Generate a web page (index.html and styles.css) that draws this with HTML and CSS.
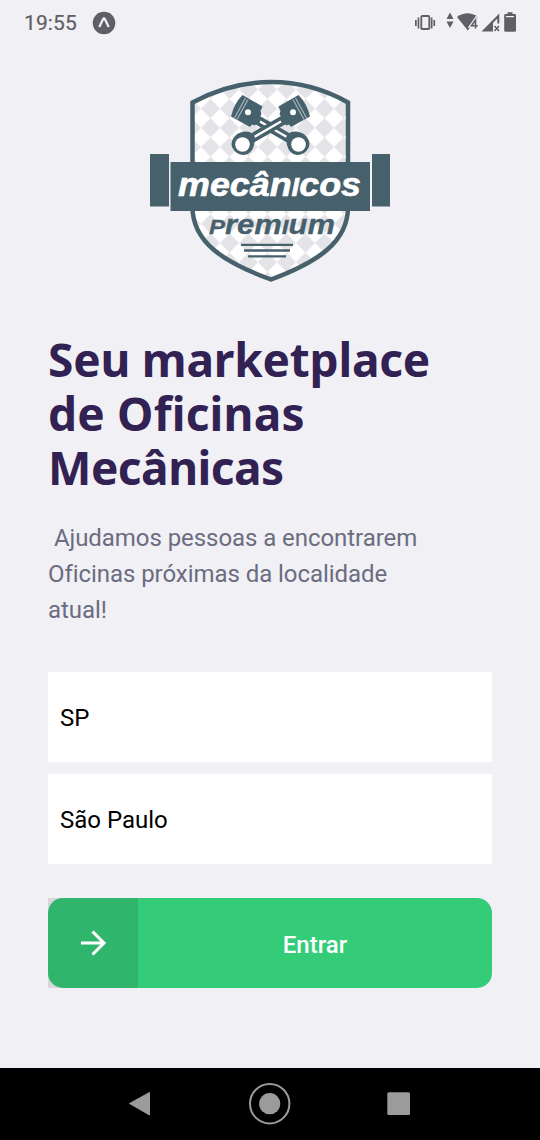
FILE: index.html
```html
<!DOCTYPE html>
<html lang="pt-BR">
<head>
<meta charset="utf-8">
<meta name="viewport" content="width=device-width">
<title>Mecânicos Premium</title>
<link rel="stylesheet" href="styles.css">
</head>
<body>
<div class="screen">
  <header class="status">
    <span class="clock">19:55</span>
    <svg class="app-icon" viewBox="0 0 24 24"><circle cx="12" cy="12" r="11.3" fill="#5f5f65"/><path d="M7.300 16 11 8.200q1-1.500 2 0l3.700 7.800" fill="none" stroke="#f0f0f5" stroke-width="2.200"/></svg>
    <svg class="indicators" viewBox="414 10 104 26" fill="#5f5f65">
      <path d="M415 20h1.700v6H415zM417.600 17.500h1.700v11h-1.700zM430.800 17.500h1.700v11h-1.700zM433.400 20h1.700v6h-1.700z"/>
      <rect x="421.300" y="16" width="8" height="13" rx="1" fill="none" stroke="#5f5f65" stroke-width="1.800"/>
      <path d="m450 12.500 3.500 6.500h-7zM450 28l-3.500-6.500h7z"/>
      <path d="M457 17q10.500-7.500 21 0l-10.200 13.500z"/>
      <path d="M475.500 28.500v-8.500l-4 5.700h6.300" fill="none" stroke="#f0f0f5" stroke-width="4"/>
      <path d="M475.500 28.500v-8.500l-4 5.700h6.300" fill="none" stroke="#5f5f65" stroke-width="1.600"/>
      <path d="M481.500 31.500 499.300 13.500v10h-2v-5L493 23v8.500z"/>
      <path d="m494.500 26 4.500 5m0-5-4.500 5" stroke="#5f5f65" stroke-width="1.500"/>
      <path d="M507.500 12.300h5V14h2.200q1.300 0 1.300 1.300v15.200q0 1.300-1.300 1.300h-9.200q-1.300 0-1.300-1.300V15.300q0-1.300 1.300-1.300h2z"/>
      <path d="M506 16h8v1.200h-8z" fill="#f0f0f5"/>
    </svg>
  </header>
  <main class="content">
    <svg class="logo" viewBox="150 79 240 204" role="img" aria-label="Mecânicos Premium">
      <defs>
        <pattern id="checks" x="201" y="99" width="19" height="19.200" patternUnits="userSpaceOnUse">
          <path fill="#fff" d="M0 0h19v19.200H0z"/><path d="m9.500 0 9.500 9.600-9.500 9.600L0 9.600z" fill="#e4e4e8"/>
        </pattern>
        <g id="piston">
          <path d="m254 118 38 22" stroke="#46606c" stroke-width="9.500"/>
          <path d="m260 121.500 29 16.800" stroke="#fff" stroke-width="2.200"/>
          <path d="m286 137 5-5q8-2 14 3 6 6 4 12-4 8-12 8-8-1-10-10z" fill="#46606c"/>
          <circle cx="298.500" cy="144.500" r="7.300" fill="#fff"/>
          <path d="m242.500 95 20 11.500-2 4.500 1 3-6.500 11.500-3-1-2 2.500-19-10.500q3-13 11.500-21.500z" fill="#46606c"/>
          <path d="m234.500 118 11-20M237 119.500l11-20" stroke="#a8b6bd" stroke-width="1.200"/>
          <circle cx="248" cy="112.300" r="3" fill="#fff"/>
        </g>
      </defs>
      <path d="M192.500 102.500Q230 82 271 82t77 20.500V207c0 35-30 55-77 72.500-48-17.500-78.500-37.500-78.500-72.500z" fill="url(#checks)" stroke="#46606c" stroke-width="4.500"/>
      <use href="#piston"/><use href="#piston" transform="translate(541) scale(-1 1)"/>
      <path d="M150 154h19v52.500h-19zM372 154h18v52.500h-18zM170.500 162H370v49H170.500z" fill="#46606c"/>
      <text class="brand" x="178" y="196.300" textLength="183" lengthAdjust="spacingAndGlyphs">mecân<tspan class="brand-small">i</tspan>cos</text>
      <text class="tier" x="209" y="233.500" textLength="126" lengthAdjust="spacingAndGlyphs"><tspan class="tier-small">p</tspan>rem<tspan class="tier-small">i</tspan>um</text>
      <path d="M241 244.800h52M244 250.500h46M248 256.300h38" stroke="#46606c" stroke-width="2.300"/>
    </svg>
    <h1 class="title"><span class="line first">Seu marketplace</span><span class="line second">de Oficinas</span><span class="line third">Mecânicas</span></h1>
    <p class="description">&nbsp;Ajudamos pessoas a encontrarem Oficinas próximas da localidade atual!</p>
    <div class="field">SP</div>
    <div class="field">São Paulo</div>
    <div class="button">
      <span class="button-icon"><svg viewBox="0 0 30 30"><path d="M3 15h23M14.500 3.500 26 15 14.500 26.500" fill="none" stroke="#fff" stroke-width="3"/></svg></span>
      <span class="button-label">Entrar</span>
    </div>
  </main>
  <nav class="navigation">
    <svg viewBox="0 1068 540 72" fill="#9b9b9b"><path d="m129.500 1103.500 20-11v22.500z" stroke="#9b9b9b" stroke-linejoin="round"/><circle cx="269.700" cy="1103.700" r="10.600"/><circle cx="269.700" cy="1103.700" r="19.700" fill="none" stroke="#9b9b9b" stroke-width="2"/><rect x="387.300" y="1092.300" width="22.700" height="22.700" rx="1.500"/></svg>
  </nav>
</div>
</body>
</html>
```

FILE: styles.css
```css
body { margin: 0; background: #f0f0f5; font-family: Roboto, sans-serif; }
.screen { width: 540px; height: 1140px; display: flex; flex-direction: column; overflow: hidden; }
.status { height: 45px; flex: none; display: flex; align-items: center; padding: 0 22px 0 24px; color: #5f5f65; box-sizing: border-box; }
.clock { width: 53px; font-size: 21px; font-weight: 400; letter-spacing: 0.1px; -webkit-text-stroke: 0.2px #5f5f65; }
.app-icon { width: 24px; height: 24px; margin-left: 15px; }
.indicators { width: 104px; height: 26px; margin-left: auto; }
.content { flex: 1; display: flex; flex-direction: column; padding: 34px 48px 0; }
.logo { width: 240px; height: 204px; align-self: center; }
.brand { font: italic 700 34px "Liberation Sans", sans-serif; fill: #fff; stroke: #fff; stroke-width: 0.6px; }
.brand-small { font-size: 37px; font-variant: small-caps; }
.tier { font: italic 700 27px "Liberation Sans", sans-serif; fill: #46606c; stroke: #46606c; stroke-width: 0.3px; }
.tier-small { font-size: 30px; font-variant: small-caps; }
.title { margin: 49px 0 0; color: #322153; font: 700 46px/54px "Noto Sans", sans-serif; }
.line { display: block; white-space: nowrap; }
.first { letter-spacing: -0.2px; }
.second { letter-spacing: 0.2px; }
.third { letter-spacing: -0.5px; }
.description { width: 390px; margin: 26px 0 0; color: #6c6c80; font-size: 24px; line-height: 36px; letter-spacing: -0.06px; }
.field { height: 90px; flex: none; display: flex; align-items: center; padding: 2px 0 0 12px; box-sizing: border-box; margin-bottom: 12px; background: #fff; color: #000; font-size: 24px; }
.description + .field { margin-top: 44px; }
.button { height: 90px; flex: none; display: flex; margin-top: 22px; background: linear-gradient(90deg, #d7d7dc 20px, transparent 20px); }
.button-icon { width: 90px; display: grid; place-items: center; background: #30b66c; border-radius: 15px 0 0 15px; }
.button-icon svg { width: 30px; height: 30px; }
.button-label { flex: 1; display: grid; place-items: center; padding-top: 3px; background: #34cb79; border-radius: 0 15px 15px 0; color: #fff; font-size: 24px; font-weight: 500; }
.navigation { height: 72px; flex: none; background: #000; }
.navigation svg { display: block; width: 540px; height: 72px; }
```
